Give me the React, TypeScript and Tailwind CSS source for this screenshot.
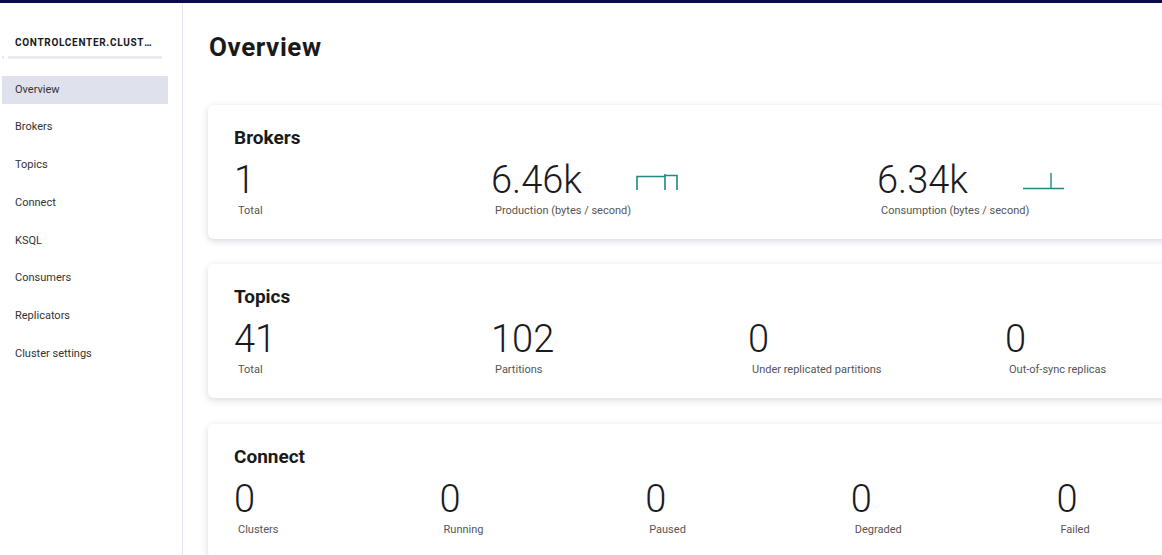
import React from "react";

const navItems = [
  "Overview",
  "Brokers",
  "Topics",
  "Connect",
  "KSQL",
  "Consumers",
  "Replicators",
  "Cluster settings",
];

function Stat({ value, label, chart }: { value: string; label: string; chart?: React.ReactNode }) {
  return (
    <div className="flex flex-col">
      <div className="flex items-start">
        <span className="text-[38px] leading-[44px] font-light text-[#1b1b1f]">{value}</span>
        {chart}
      </div>
      <span className="mt-[2px] pl-[4px] text-[11px] leading-[14px] text-[#555]">{label}</span>
    </div>
  );
}

function ProductionChart() {
  return (
    <svg width="44" height="18" viewBox="0 0 44 18" className="ml-[54px] mt-[15px]" fill="none" stroke="#1f8a82" strokeWidth="1.6">
      <path d="M1 17 V3.5 H29 M29 1 V17 M29 2.5 H41 V17" />
    </svg>
  );
}

function ConsumptionChart() {
  return (
    <svg width="44" height="18" viewBox="0 0 44 18" className="ml-[54px] mt-[14px]" fill="none" stroke="#1f8a82" strokeWidth="1.4">
      <path d="M1 16.5 H42 M29 1 V16.5" />
    </svg>
  );
}

function Card({ title, children }: { title: string; children: React.ReactNode }) {
  return (
    <div className="w-[1080px] rounded-[6px] bg-white px-[26px] pt-[21px] pb-[21px] shadow-[0_2px_7px_rgba(40,40,80,0.18)]">
      <h2 className="text-[19px] leading-[24px] font-bold text-[#1a1a1a]">{title}</h2>
      <div className="mt-[8px]">{children}</div>
    </div>
  );
}

export default function App() {
  return (
    <div className="h-[555px] w-full overflow-hidden bg-white" style={{ fontFamily: "Roboto, 'Liberation Sans', sans-serif" }}>
      <div className="h-[3px] bg-[#0a0a52]" />
      <div className="flex h-[552px]">
        <aside className="w-[183px] shrink-0 border-r border-[#e4e6ef]">
          <div className="pt-[34px] pl-[15px] pr-[30px] text-[10px] leading-[12px] font-bold tracking-[0.7px] text-[#1a1a1a] whitespace-nowrap overflow-hidden text-ellipsis">
            CONTROLCENTER.CLUSTER_1
          </div>
          <div className="mt-[7px] flex h-[3px] pl-[2px]">
            <div className="w-[2px] bg-[#ebebf3]" />
            <div className="ml-[4px] w-[154px] bg-[#ebebf3]" />
          </div>
          <nav className="mt-[17px] flex flex-col gap-[9.7px] pl-[2px] pr-[14px]">
            {navItems.map((item, i) => (
              <div
                key={item}
                className={`h-[28px] flex items-center pl-[13px] text-[11px] text-[#333] ${i === 0 ? "bg-[#dfe1ec]" : ""}`}
              >
                {item}
              </div>
            ))}
          </nav>
        </aside>

        <main className="flex-1 overflow-hidden pl-[25px]">
          <h1 className="pt-[28px] pl-[1px] text-[26px] leading-[32px] font-bold tracking-[0.6px] text-[#1a1a1a]">Overview</h1>
          <div className="mt-[42px] flex flex-col">
            <Card title="Brokers">
              <div className="grid grid-cols-[257px_386px_386px]">
                <Stat value="1" label="Total" />
                <Stat value="6.46k" label="Production (bytes / second)" chart={<ProductionChart />} />
                <Stat value="6.34k" label="Consumption (bytes / second)" chart={<ConsumptionChart />} />
              </div>
            </Card>
            <div className="h-[25px]" />
            <Card title="Topics">
              <div className="grid grid-cols-4">
                <Stat value="41" label="Total" />
                <Stat value="102" label="Partitions" />
                <Stat value="0" label="Under replicated partitions" />
                <Stat value="0" label="Out-of-sync replicas" />
              </div>
            </Card>
            <div className="h-[26px]" />
            <Card title="Connect">
              <div className="grid grid-cols-5">
                <Stat value="0" label="Clusters" />
                <Stat value="0" label="Running" />
                <Stat value="0" label="Paused" />
                <Stat value="0" label="Degraded" />
                <Stat value="0" label="Failed" />
              </div>
            </Card>
          </div>
        </main>
      </div>
    </div>
  );
}
